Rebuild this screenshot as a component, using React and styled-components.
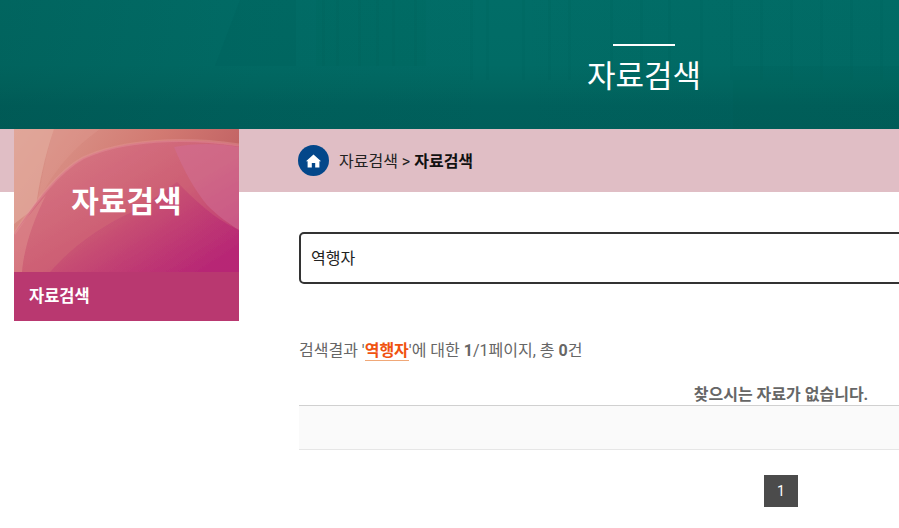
import React from "react";
import styled, { createGlobalStyle } from "styled-components";

const Global = createGlobalStyle`
  html, body { margin: 0; padding: 0; background: #fff; overflow: hidden; }
  body { font-family: Roboto, "Noto Sans CJK KR", "Noto Sans", sans-serif; }
  * { box-sizing: border-box; }
`;

const Page = styled.div`
  width: 899px;
  height: 528px;
  overflow: hidden;
`;

const Hero = styled.header`
  position: relative;
  height: 129px;
  padding: 44px 0 0 389px;
  display: flex;
  flex-direction: column;
  align-items: center;
  color: #fff;
  background: linear-gradient(180deg, #016d67 0, #016b65 50%, #016660 68%, #00605c 82%, #005f5b 100%);
  svg { position: absolute; inset: 0; }
`;

const HeroRule = styled.span`
  position: relative;
  display: block;
  width: 62px;
  height: 2px;
  background: #fff;
`;

const HeroTitle = styled.h1`
  position: relative;
  margin: 9px 0 0;
  font-size: 31px;
  line-height: 44px;
  font-weight: 400;
`;

const Body = styled.div`
  display: grid;
  grid-template-columns: 14px 225px 60px 964px;
  grid-template-rows: 63px auto;
`;

const Band = styled.div`
  grid-column: 1 / -1;
  grid-row: 1;
  background: #e0bec5;
  padding-left: 298px;
  display: flex;
  align-items: center;
`;

const HomeBadge = styled.span`
  width: 31px;
  height: 31px;
  border-radius: 50%;
  background: #03478a;
  display: flex;
  align-items: center;
  justify-content: center;
`;

const Crumbs = styled.div`
  margin-left: 10px;
  padding-top: 2px;
  font-size: 16px;
  color: #222;
  line-height: 24px;
  b { font-weight: 700; color: #111; }
`;

const Side = styled.aside`
  grid-column: 2;
  grid-row: 1 / 3;
  z-index: 1;
  width: 225px;
`;

const SideArt = styled.div`
  position: relative;
  height: 143px;
  display: flex;
  align-items: center;
  justify-content: center;
  overflow: hidden;
  svg { position: absolute; inset: 0; }
`;

const SideTitle = styled.h2`
  position: relative;
  margin: 0;
  padding-top: 3px;
  color: #fff;
  font-size: 30px;
  font-weight: 700;
  line-height: 44px;
`;

const SideMenu = styled.div`
  height: 49px;
  background: #b93870;
  color: #fff;
  font-size: 16.5px;
  font-weight: 700;
  padding: 0 0 3px 15px;
  display: flex;
  align-items: center;
`;

const Content = styled.main`
  grid-column: 4;
  grid-row: 2;
  padding-top: 40px;
`;

const SearchBox = styled.div`
  height: 52px;
  border: 2px solid #333;
  border-radius: 5px;
  padding: 0 0 3px 10px;
  display: flex;
  align-items: center;
  font-size: 16px;
  color: #222;
`;

const Summary = styled.p`
  margin: 55px 0 0;
  font-size: 16px;
  line-height: 24px;
  color: #666;
  b { font-weight: 700; }
`;

const Keyword = styled.strong`
  color: #f0520f;
  font-weight: 700;
  border-bottom: 1px solid #f0a878;
`;

const Empty = styled.div`
  margin-top: 22px;
  text-align: center;
  font-size: 16px;
  line-height: 20px;
  font-weight: 700;
  color: #666;
`;

const EmptyRow = styled.div`
  height: 45px;
  background: #fafafa;
  border-top: 1px solid #d0d0d0;
  border-bottom: 1px solid #e6e6e6;
`;

const Pager = styled.nav`
  margin-top: 25px;
  display: flex;
  justify-content: center;
`;

const PageBtn = styled.span`
  width: 34px;
  height: 32px;
  background: #4b4b4b;
  color: #fff;
  font-size: 14px;
  display: flex;
  align-items: center;
  justify-content: center;
`;

const stripes = [322, 336, 358, 376, 392, 414, 470, 486, 522, 548, 568, 610, 640, 668, 700, 730, 760, 790, 820, 850, 880];

const HeroArt = () => (
  <svg width="899" height="129" viewBox="0 0 899 129">
    <defs>
      <linearGradient id="heroShade" x1="0" y1="0" x2="1" y2="0">
        <stop offset="0" stopColor="#00443f" stopOpacity=".2" />
        <stop offset=".28" stopColor="#00443f" stopOpacity=".06" />
        <stop offset=".55" stopColor="#00443f" stopOpacity="0" />
        <stop offset="1" stopColor="#00443f" stopOpacity=".05" />
      </linearGradient>
    </defs>
    <rect width="899" height="129" fill="url(#heroShade)" />
    <path d="M240 0H296V66H215Z" fill="#00504b" opacity=".1" />
    <rect x="316" width="110" height="66" fill="#00504b" opacity=".03" />
    {stripes.map((x) => (
      <rect key={x} x={x} width="3" height={x < 430 ? 66 : 80} fill="#00504b" opacity=".06" />
    ))}
    <rect x="733" y="66" width="166" height="63" fill="#00504b" opacity=".06" />
  </svg>
);

const HomeIcon = () => (
  <svg width="15" height="14" viewBox="0 0 15 14">
    <path fill="#fff" d="M7.5 0.5 15 7.2 13.4 7.2 13.4 13.5 9.2 13.5 9.2 9 5.8 9 5.8 13.5 1.6 13.5 1.6 7.2 0 7.2Z" />
  </svg>
);

const Art = () => (
  <svg width="225" height="143" viewBox="0 0 225 143">
    <defs>
      <linearGradient id="base" x1="0" y1="0" x2="1" y2=".45">
        <stop offset="0" stopColor="#dc9c90" />
        <stop offset=".55" stopColor="#d27a72" />
        <stop offset="1" stopColor="#bd5c60" />
      </linearGradient>
      <linearGradient id="inner" x1="0" y1="0" x2="1" y2="1">
        <stop offset="0" stopColor="#d97c86" />
        <stop offset=".55" stopColor="#cd5f74" />
        <stop offset="1" stopColor="#ba2c74" />
      </linearGradient>
      <linearGradient id="lower" x1="0" y1="0" x2="1" y2=".7">
        <stop offset="0" stopColor="#c8506f" stopOpacity="0" />
        <stop offset="1" stopColor="#b62474" />
      </linearGradient>
      <filter id="soft"><feGaussianBlur stdDeviation=".7" /></filter>
    </defs>
    <rect width="225" height="143" fill="url(#base)" />
    <g filter="url(#soft)">
      <path d="M0 0H40C30 30 25 55 22 78L0 95Z" fill="#e2aa9c" opacity=".7" />
      <path d="M40 0H86C55 22 35 48 22 78 28 50 32 25 40 0Z" fill="#e09a8e" opacity=".35" />
      <path d="M225 16C170 8 110 10 69 29 45 42 22 72 0 105V143H225Z" fill="url(#inner)" />
      <path d="M225 16C170 8 110 10 69 29 45 42 22 72 0 105" fill="none" stroke="#e89aa0" strokeWidth="3" opacity=".35" />
      <path d="M0 105C10 92 22 78 32 66 20 90 10 118 8 143H0Z" fill="#e39a94" opacity=".4" />
      <path d="M160 18C170 42 180 60 193 76 204 87 215 95 225 101V18C203 14 180 14 160 18Z" fill="#d26f98" opacity=".5" />
      <path d="M36 143C58 118 85 98 120 82 140 70 150 62 163 53 180 70 200 90 225 101V143Z" fill="url(#lower)" opacity=".8" />
    </g>
  </svg>
);

export default function App() {
  return (
    <Page>
      <Global />
      <Hero>
        <HeroArt />
        <HeroRule />
        <HeroTitle>자료검색</HeroTitle>
      </Hero>
      <Body>
        <Band>
          <HomeBadge><HomeIcon /></HomeBadge>
          <Crumbs>자료검색 &gt; <b>자료검색</b></Crumbs>
        </Band>
        <Side>
          <SideArt>
            <Art />
            <SideTitle>자료검색</SideTitle>
          </SideArt>
          <SideMenu>자료검색</SideMenu>
        </Side>
        <Content>
          <SearchBox>역행자</SearchBox>
          <Summary>검색결과 '<Keyword>역행자</Keyword>'에 대한 <b>1</b>/1페이지, 총 <b>0</b>건</Summary>
          <Empty>찾으시는 자료가 없습니다.</Empty>
          <EmptyRow />
          <Pager><PageBtn>1</PageBtn></Pager>
        </Content>
      </Body>
    </Page>
  );
}
